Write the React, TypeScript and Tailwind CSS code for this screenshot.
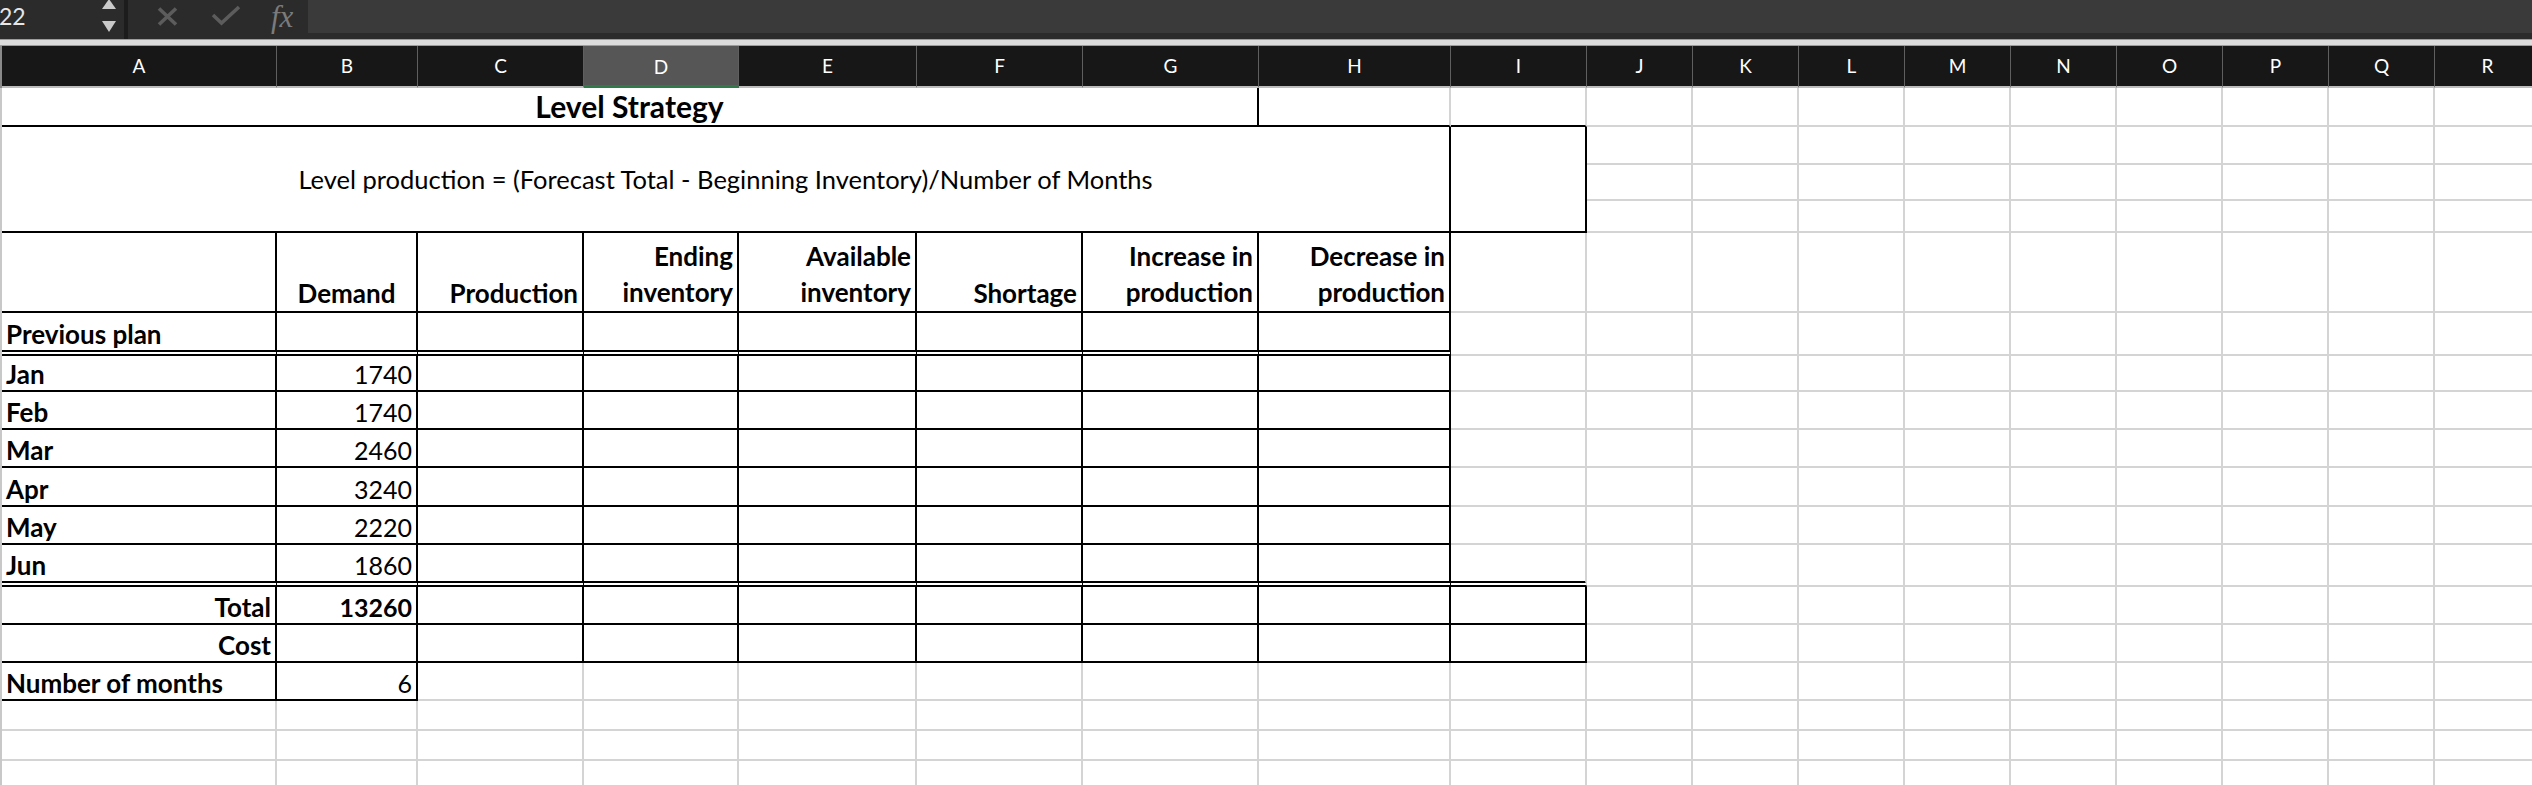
import React from "react";

type Edge = "g" | "k" | "d";
type Align = "l" | "r" | "c";

const rightCls: Record<Edge, string> = {
  g: "border-r-2 border-r-[#d4d4d4]",
  k: "border-r-2 border-r-black",
  d: "border-r-2 border-r-black",
};

const bottomCls: Record<Edge, string> = {
  g: "border-b-2 border-b-[#d4d4d4]",
  k: "border-b-2 border-b-black",
  d: "border-b-[6px] border-b-black [border-bottom-style:double]",
};

const alignCls: Record<Align, string> = {
  l: "justify-start text-left",
  r: "justify-end text-right",
  c: "justify-center text-center",
};

const letters = ["A", "B", "C", "D", "E", "F", "G", "H", "I", "J", "K", "L", "M", "N", "O", "P", "Q", "R"];

const gridCols =
  "grid-cols-[275px_141px_166px_155px_178px_166px_176px_192px_136px_106px_106px_106px_106px_106px_106px_106px_106px_106px]";

function Cell({
  r = "g",
  b = "g",
  align = "r",
  bold = false,
  span = "",
  children,
}: {
  r?: Edge;
  b?: Edge;
  align?: Align;
  bold?: boolean;
  span?: string;
  children?: React.ReactNode;
}) {
  return (
    <div
      className={`flex items-end overflow-visible whitespace-nowrap px-[4px] pb-[1px] ${rightCls[r]} ${bottomCls[b]} ${alignCls[align]} ${bold ? "font-bold" : ""} ${span}`}
    >
      {children}
    </div>
  );
}

// columns J..R are always plain gridlines
function Blanks({ row, from = 9 }: { row: string; from?: number }) {
  return (
    <>
      {letters.slice(from).map((l) => (
        <Cell key={row + l} />
      ))}
    </>
  );
}

function TwoLine({ top, bottom }: { top: string; bottom: string }) {
  return (
    <div className="flex flex-col items-end leading-[36px]">
      <span>{top}</span>
      <span>{bottom}</span>
    </div>
  );
}

const months: [string, string][] = [
  ["Jan", "1740"],
  ["Feb", "1740"],
  ["Mar", "2460"],
  ["Apr", "3240"],
  ["May", "2220"],
];

function Num({ children }: { children: React.ReactNode }) {
  return <span className="text-[25px]">{children}</span>;
}

function FormulaBar() {
  return (
    <div className="flex h-[39px] bg-[#2b2b2b]">
      <div className="flex w-[124px] items-start">
        <span className="-ml-[1px] pt-[1px] text-[23px] leading-[30px] text-[#e6e6e6]">22</span>
        <svg className="ml-auto mr-[7px]" width="16" height="34" viewBox="0 0 16 34">
          <polygon points="1,9 8,-1 15,9" fill="#c9c9c9" />
          <polygon points="1,21 15,21 8,32" fill="#c9c9c9" />
        </svg>
      </div>
      <div className="w-[4px] bg-[#1c1c1c]" />
      <div className="flex items-start">
        <svg className="ml-[29px] mt-[7px]" width="21" height="19" viewBox="0 0 21 19">
          <path d="M2 1.5 L19 17.5 M19 1.5 L2 17.5" stroke="#5c5c5c" strokeWidth="3.6" />
        </svg>
        <svg className="ml-[33px] mt-[5px]" width="30" height="21" viewBox="0 0 30 21">
          <path d="M2 10 L10.5 18 L28 2" stroke="#5c5c5c" strokeWidth="3.6" fill="none" />
        </svg>
        <span className="ml-[30px] pr-[3px] text-[31px] italic leading-[34px] text-[#7b7b7b] [font-family:'Liberation_Serif',serif]">
          fx
        </span>
      </div>
      <div className="ml-[12px] h-[33px] flex-1 bg-[#3a3a3a]" />
    </div>
  );
}

function ColumnHeader() {
  return (
    <div className={`grid h-[42px] ${gridCols} border-l-2 border-l-[#8a8a8a] bg-[#171717]`}>
      {letters.map((l) =>
        l === "D" ? (
          <div
            key={l}
            className="flex items-center justify-center border-r border-r-[#5f5f5f] border-b-[3px] border-b-[#2f7a49] bg-[#565656] pt-[2px] text-[19px] text-white"
          >
            {l}
          </div>
        ) : (
          <div
            key={l}
            className="flex items-center justify-center border-r border-r-[#5f5f5f] border-b-2 border-b-[#bdbdbd] text-[19px] text-white"
          >
            {l}
          </div>
        )
      )}
    </div>
  );
}

export default function App() {
  return (
    <div className="h-[785px] w-[2532px] overflow-hidden bg-white text-[26px] leading-[30px] text-black [font-family:Lato,sans-serif]">
      <FormulaBar />
      <div className="h-[7px] border-y border-y-[#9c9c9c] bg-[#dcdcdc]" />
      <ColumnHeader />

      <div
        className={`grid ${gridCols} grid-rows-[39px_38px_36px_32px_80px_43px_36px_38px_38px_39px_38px_42px_38px_38px_38px_30px_30px_30px] border-l-2 border-l-[#c8c8c8]`}
      >
        {/* row 1 */}
        <Cell span="col-span-7" r="k" b="k" align="c" bold>
          <span className="pb-[1px] text-[30px] leading-[34px]">Level Strategy</span>
        </Cell>
        <Cell b="k" />
        <Cell b="k" />
        <Blanks row="1" />

        {/* rows 2-4 */}
        <div className="col-span-8 row-span-3 flex items-center justify-center border-r-2 border-b-2 border-r-black border-b-black text-[25.5px]">
          Level production = (Forecast Total - Beginning Inventory)/Number of Months
        </div>
        <div className="row-span-3 border-r-2 border-b-2 border-r-black border-b-black" />
        <Blanks row="2" />
        <Blanks row="3" />
        <Blanks row="4" />

        {/* row 5 headings */}
        <Cell r="k" b="k" />
        <Cell r="k" b="k" align="c" bold>
          <span className="pb-[2px]">Demand</span>
        </Cell>
        <Cell r="k" b="k" bold>
          <span className="pb-[2px]">Production</span>
        </Cell>
        <Cell r="k" b="k" bold>
          <TwoLine top="Ending" bottom="inventory" />
        </Cell>
        <Cell r="k" b="k" bold>
          <TwoLine top="Available" bottom="inventory" />
        </Cell>
        <Cell r="k" b="k" bold>
          <span className="pb-[2px]">Shortage</span>
        </Cell>
        <Cell r="k" b="k" bold>
          <TwoLine top="Increase in" bottom="production" />
        </Cell>
        <Cell r="k" b="k" bold>
          <TwoLine top="Decrease in" bottom="production" />
        </Cell>
        <Cell />
        <Blanks row="5" />

        {/* row 6 */}
        <Cell r="k" b="d" align="l" bold>
          Previous plan
        </Cell>
        {letters.slice(1, 8).map((l) => (
          <Cell key={"6" + l} r="k" b="d" />
        ))}
        <Cell />
        <Blanks row="6" />

        {/* months */}
        {months.map(([m, v]) => (
          <React.Fragment key={m}>
            <Cell r="k" b="k" align="l" bold>
              {m}
            </Cell>
            <Cell r="k" b="k">
              <Num>{v}</Num>
            </Cell>
            {letters.slice(2, 8).map((l) => (
              <Cell key={m + l} r="k" b="k" />
            ))}
            <Cell />
            <Blanks row={m} />
          </React.Fragment>
        ))}

        {/* Jun */}
        <Cell r="k" b="d" align="l" bold>
          Jun
        </Cell>
        <Cell r="k" b="d">
          <Num>1860</Num>
        </Cell>
        {letters.slice(2, 8).map((l) => (
          <Cell key={"jun" + l} r="k" b="d" />
        ))}
        <Cell b="d" />
        <Blanks row="jun" />

        {/* Total */}
        <Cell r="k" b="k" bold>
          Total
        </Cell>
        <Cell r="k" b="k" bold>
          <Num>13260</Num>
        </Cell>
        {letters.slice(2, 9).map((l) => (
          <Cell key={"tot" + l} r="k" b="k" />
        ))}
        <Blanks row="tot" />

        {/* Cost */}
        <Cell r="k" b="k" bold>
          Cost
        </Cell>
        {letters.slice(1, 9).map((l) => (
          <Cell key={"cost" + l} r="k" b="k" />
        ))}
        <Blanks row="cost" />

        {/* Number of months */}
        <Cell r="k" b="k" align="l" bold>
          Number of months
        </Cell>
        <Cell r="k" b="k">
          <Num>6</Num>
        </Cell>
        <Blanks row="num" from={2} />

        <Blanks row="16" from={0} />
        <Blanks row="17" from={0} />
        <Blanks row="18" from={0} />
      </div>
    </div>
  );
}
